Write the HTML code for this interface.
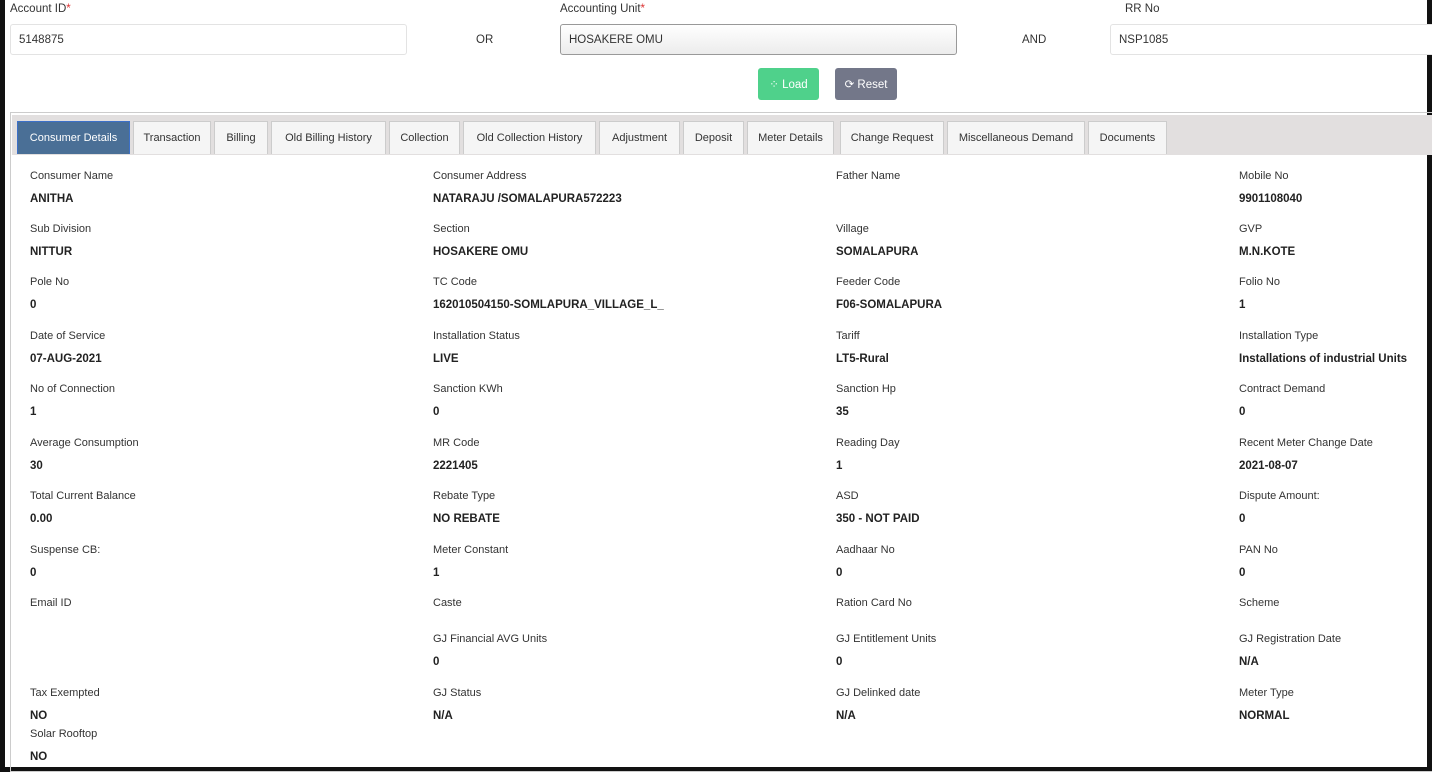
<!DOCTYPE html>
<html><head><meta charset="utf-8"><style>
*{box-sizing:border-box;margin:0;padding:0}
body{width:1432px;height:770px;background:#111;font-family:"Liberation Sans",sans-serif;color:#333;position:relative;overflow:hidden}
#pg{position:absolute;left:5px;top:0;width:1422px;height:767px;background:#fff}
.a{position:absolute;white-space:nowrap}
.lbl{font-size:11.5px;color:#333}
.inp{position:absolute;height:31px;border:1px solid #e3e3e3;border-radius:3px;background:#fff;font-size:11.5px;padding:9px 0 0 8px;color:#333}
.btn{position:absolute;height:32px;border-radius:3px;color:#fff;font-size:11.5px;padding-top:9px;text-align:center}
#panel{position:absolute;left:5px;top:112px;width:1422px;height:660px;border:1px solid #ccc;border-right:none}
#tabbar{position:absolute;left:1px;top:2px;right:0;height:40px;background:#e2dfdf}
.tab{position:absolute;top:6px;height:33px;background:#f5f5f5;border:1px solid #ccc;border-bottom:none;font-size:11px;color:#333;text-align:center;padding-top:10px}
.tab.act{background:#4a6f96;color:#fff;border-color:#3c70c8}
.l{position:absolute;font-size:11px;color:#333;white-space:nowrap}
.v{position:absolute;font-size:11.5px;font-weight:bold;color:#222;white-space:nowrap}
</style></head><body><div id="pg">
<div class="a lbl" style="left:5px;top:3px">Account ID<span style="color:#d33">*</span></div>
<div class="inp" style="left:5px;top:24px;width:397px">5148875</div>
<div class="a lbl" style="left:471px;top:34px">OR</div>
<div class="a lbl" style="left:555px;top:3px">Accounting Unit<span style="color:#d33">*</span></div>
<div class="inp" style="left:555px;top:24px;width:397px;border-color:#999;background:linear-gradient(#fff,#ececec)">HOSAKERE OMU</div>
<div class="a lbl" style="left:1017px;top:34px">AND</div>
<div class="a lbl" style="left:1120px;top:3px">RR No</div>
<div class="inp" style="left:1105px;top:24px;width:330px">NSP1085</div>
<div class="btn" style="left:753px;top:68px;width:61px;background:#4fd18b">⁘ Load</div>
<div class="btn" style="left:830px;top:68px;width:62px;background:#737789">⟳ Reset</div>
<div id="panel"><div id="tabbar">
<div class="tab act" style="left:5px;width:113px">Consumer Details</div>
<div class="tab" style="left:121px;width:78px">Transaction</div>
<div class="tab" style="left:202px;width:54px">Billing</div>
<div class="tab" style="left:259px;width:115px">Old Billing History</div>
<div class="tab" style="left:377px;width:71px">Collection</div>
<div class="tab" style="left:451px;width:133px">Old Collection History</div>
<div class="tab" style="left:587px;width:81px">Adjustment</div>
<div class="tab" style="left:671px;width:61px">Deposit</div>
<div class="tab" style="left:735px;width:87px">Meter Details</div>
<div class="tab" style="left:828px;width:104px">Change Request</div>
<div class="tab" style="left:935px;width:138px">Miscellaneous Demand</div>
<div class="tab" style="left:1076px;width:79px">Documents</div>
</div></div>
<div id="f"></div>
</div>
<script>
var rows=[[170,[["Consumer Name","ANITHA"],["Consumer Address","NATARAJU /SOMALAPURA572223"],["Father Name",""],["Mobile No","9901108040"]]],
[223,[["Sub Division","NITTUR"],["Section","HOSAKERE OMU"],["Village","SOMALAPURA"],["GVP","M.N.KOTE"]]],
[276,[["Pole No","0"],["TC Code","162010504150-SOMLAPURA_VILLAGE_L_"],["Feeder Code","F06-SOMALAPURA"],["Folio No","1"]]],
[330,[["Date of Service","07-AUG-2021"],["Installation Status","LIVE"],["Tariff","LT5-Rural"],["Installation Type","Installations of industrial Units"]]],
[383,[["No of Connection","1"],["Sanction KWh","0"],["Sanction Hp","35"],["Contract Demand","0"]]],
[437,[["Average Consumption","30"],["MR Code","2221405"],["Reading Day","1"],["Recent Meter Change Date","2021-08-07"]]],
[490,[["Total Current Balance","0.00"],["Rebate Type","NO REBATE"],["ASD","350 - NOT PAID"],["Dispute Amount:","0"]]],
[544,[["Suspense CB:","0"],["Meter Constant","1"],["Aadhaar No","0"],["PAN No","0"]]],
[597,[["Email ID",""],["Caste",""],["Ration Card No",""],["Scheme",""]]],
[633,[["",""],["GJ Financial AVG Units","0"],["GJ Entitlement Units","0"],["GJ Registration Date","N/A"]]],
[687,[["Tax Exempted","NO"],["GJ Status","N/A"],["GJ Delinked date","N/A"],["Meter Type","NORMAL"]]],
[728,[["Solar Rooftop","NO"],["",""],["",""],["",""]]]];
var xs=[25,428,831,1234],h="";
rows.forEach(function(r){r[1].forEach(function(c,i){
if(c[0])h+='<div class="l" style="left:'+xs[i]+'px;top:'+r[0]+'px">'+c[0]+'</div>';
if(c[1])h+='<div class="v" style="left:'+xs[i]+'px;top:'+(r[0]+23)+'px">'+c[1]+'</div>';});});
document.getElementById('f').innerHTML=h;
</script>
</body></html>
